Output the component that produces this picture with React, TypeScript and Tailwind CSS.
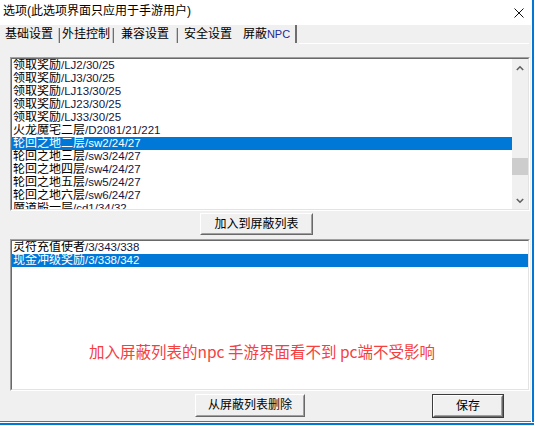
import React from "react";

const FONT = { fontFamily: '"Liberation Sans", "Noto Sans CJK SC", sans-serif' };

const topItems: [string, string][] = [
  ["领取奖励", "/LJ2/30/25"],
  ["领取奖励", "/LJ3/30/25"],
  ["领取奖励", "/LJ13/30/25"],
  ["领取奖励", "/LJ23/30/25"],
  ["领取奖励", "/LJ33/30/25"],
  ["火龙魔宅二层", "/D2081/21/221"],
  ["轮回之地二层", "/sw2/24/27"],
  ["轮回之地三层", "/sw3/24/27"],
  ["轮回之地四层", "/sw4/24/27"],
  ["轮回之地五层", "/sw5/24/27"],
  ["轮回之地六层", "/sw6/24/27"],
  ["魔道殿一层", "/cd1/34/32"],
];

const bottomItems: [string, string][] = [
  ["灵符充值使者", "/3/343/338"],
  ["现金冲级奖励", "/3/338/342"],
];

function Row({ item, selected }: { item: [string, string]; selected?: boolean }) {
  return (
    <div
      className={
        "h-[13px] shrink-0 pl-[1px] flex items-center whitespace-nowrap overflow-hidden " +
        (selected ? "bg-[#0078d7] text-white" : "text-black")
      }
    >
      <span className="text-[12px] leading-[13px]">{item[0]}</span>
      <span className={"text-[11.5px] leading-[13px] " + (selected ? "text-white" : "text-[#14143c]")}>{item[1]}</span>
    </div>
  );
}

function Sunken({ className, children }: { className: string; children: React.ReactNode }) {
  return (
    <div className={"border border-t-[#a0a0a0] border-l-[#a0a0a0] border-b-white border-r-white " + className}>
      <div className="w-full h-full border border-t-[#696969] border-l-[#696969] border-b-[#e3e3e3] border-r-[#e3e3e3] bg-white flex overflow-hidden">
        {children}
      </div>
    </div>
  );
}

function Btn({ className, label, isDefault }: { className: string; label: string; isDefault?: boolean }) {
  const inner = (
    <div className="w-full h-full border border-t-white border-l-white border-b-[#696969] border-r-[#696969]">
      <div className="w-full h-full border border-t-[#f0f0f0] border-l-[#f0f0f0] border-b-[#a0a0a0] border-r-[#a0a0a0] bg-[#f0f0f0] flex items-center justify-center text-[12px] leading-[13px] text-black">
        {label}
      </div>
    </div>
  );
  if (isDefault) {
    return <div className={"border border-[#3c3c3c] " + className}>{inner}</div>;
  }
  return <div className={className}>{inner}</div>;
}

function Chevron({ up }: { up?: boolean }) {
  return (
    <svg width="8" height="6" viewBox="0 0 8 6">
      <polyline
        points={up ? "0.8,5 4,1.8 7.2,5" : "0.8,1 4,4.2 7.2,1"}
        fill="none"
        stroke="#606060"
        strokeWidth="1.6"
      />
    </svg>
  );
}

function Sep() {
  return (
    <div className="flex self-stretch pt-[3px]">
      <div className="w-[1px] bg-[#c8c8c8]" />
      <div className="w-[1px] bg-[#6e6e6e]" />
    </div>
  );
}

export default function App() {
  return (
    <div className="w-[536px] h-[426px] bg-white flex flex-col overflow-hidden" style={FONT}>
      <div className="flex h-[422px] shrink-0">
        <div className="w-[531px] flex flex-col bg-[#f0f0f0] border-b border-[#6e6e6e]">
          {/* title bar */}
          <div className="h-[25px] shrink-0 bg-white flex items-center justify-between pl-[3px] pr-[7px]">
            <span className="text-[12px] leading-[13px] text-black -mt-[2px]">选项(此选项界面只应用于手游用户)</span>
            <svg width="10" height="10" viewBox="0 0 10 10">
              <line x1="0.5" y1="0.5" x2="9.5" y2="9.5" stroke="#111" strokeWidth="1" />
              <line x1="9.5" y1="0.5" x2="0.5" y2="9.5" stroke="#111" strokeWidth="1" />
            </svg>
          </div>
          {/* tabs */}
          <div className="h-[18px] shrink-0 flex text-[12px] leading-[13px] text-black">
            <div className="w-[58px] flex items-center justify-center">基础设置</div>
            <Sep />
            <div className="w-[52px] flex items-center justify-center">外挂控制</div>
            <Sep />
            <div className="w-[62px] flex items-center justify-center">兼容设置</div>
            <Sep />
            <div className="w-[60px] flex items-center justify-center">安全设置</div>
            <div className="w-[57px] flex items-center justify-center">
              屏蔽<span className="text-[11px] text-[#1e2a96]">NPC</span>
            </div>
            <div className="w-[2px] bg-[#6e6e6e] self-stretch" />
            <div className="flex-1" />
          </div>
          {/* panel */}
          <div className="flex-1 flex flex-col pl-[10px]">
            <div className="h-[1px] flex shrink-0 -ml-[10px]">
              <div className="w-[299px]" />
              <div className="w-[230px] bg-white" />
            </div>
            <Sunken className="w-[520px] h-[154px] mt-[13px] shrink-0">
              <div className="flex-1 flex flex-col overflow-hidden">
                {topItems.map((it, i) => (
                  <Row key={i} item={it} selected={i === 6} />
                ))}
              </div>
              <div className="w-[16px] bg-[#f0f0f0] flex flex-col">
                <div className="h-[17px] flex items-center justify-center">
                  <Chevron up />
                </div>
                <div className="h-[82px]" />
                <div className="h-[17px] bg-[#cdcdcd]" />
                <div className="flex-1" />
                <div className="h-[17px] flex items-center justify-center">
                  <Chevron />
                </div>
              </div>
            </Sunken>
            <Btn className="w-[113px] h-[22px] ml-[190px] mt-[2px] shrink-0" label="加入到屏蔽列表" />
            <Sunken className="w-[520px] h-[152px] mt-[4px] shrink-0">
              <div className="flex-1 flex flex-col">
                {bottomItems.map((it, i) => (
                  <Row key={i} item={it} selected={i === 1} />
                ))}
                <div
                  className="mt-[74px] pr-[16px] text-center text-[15.5px] leading-[20px] text-[#f54040] whitespace-nowrap"
                  style={{ fontFamily: '"Noto Sans CJK SC", sans-serif' }}
                >
                  加入屏蔽列表的npc 手游界面看不到 pc端不受影响
                </div>
              </div>
            </Sunken>
            <div className="flex items-start mt-[3px]">
              <Btn className="w-[110px] h-[23px] ml-[185px]" label="从屏蔽列表删除" />
              <Btn className="w-[72px] h-[24px] ml-[127px]" label="保存" isDefault />
            </div>
          </div>
        </div>
        <div className="w-[1px]" />
        <div className="w-[2px] bg-[#0078d7]" />
      </div>
      <div className="h-[1px] shrink-0" />
      <div className="h-[2px] w-[534px] shrink-0 bg-[#0078d7]" />
    </div>
  );
}
